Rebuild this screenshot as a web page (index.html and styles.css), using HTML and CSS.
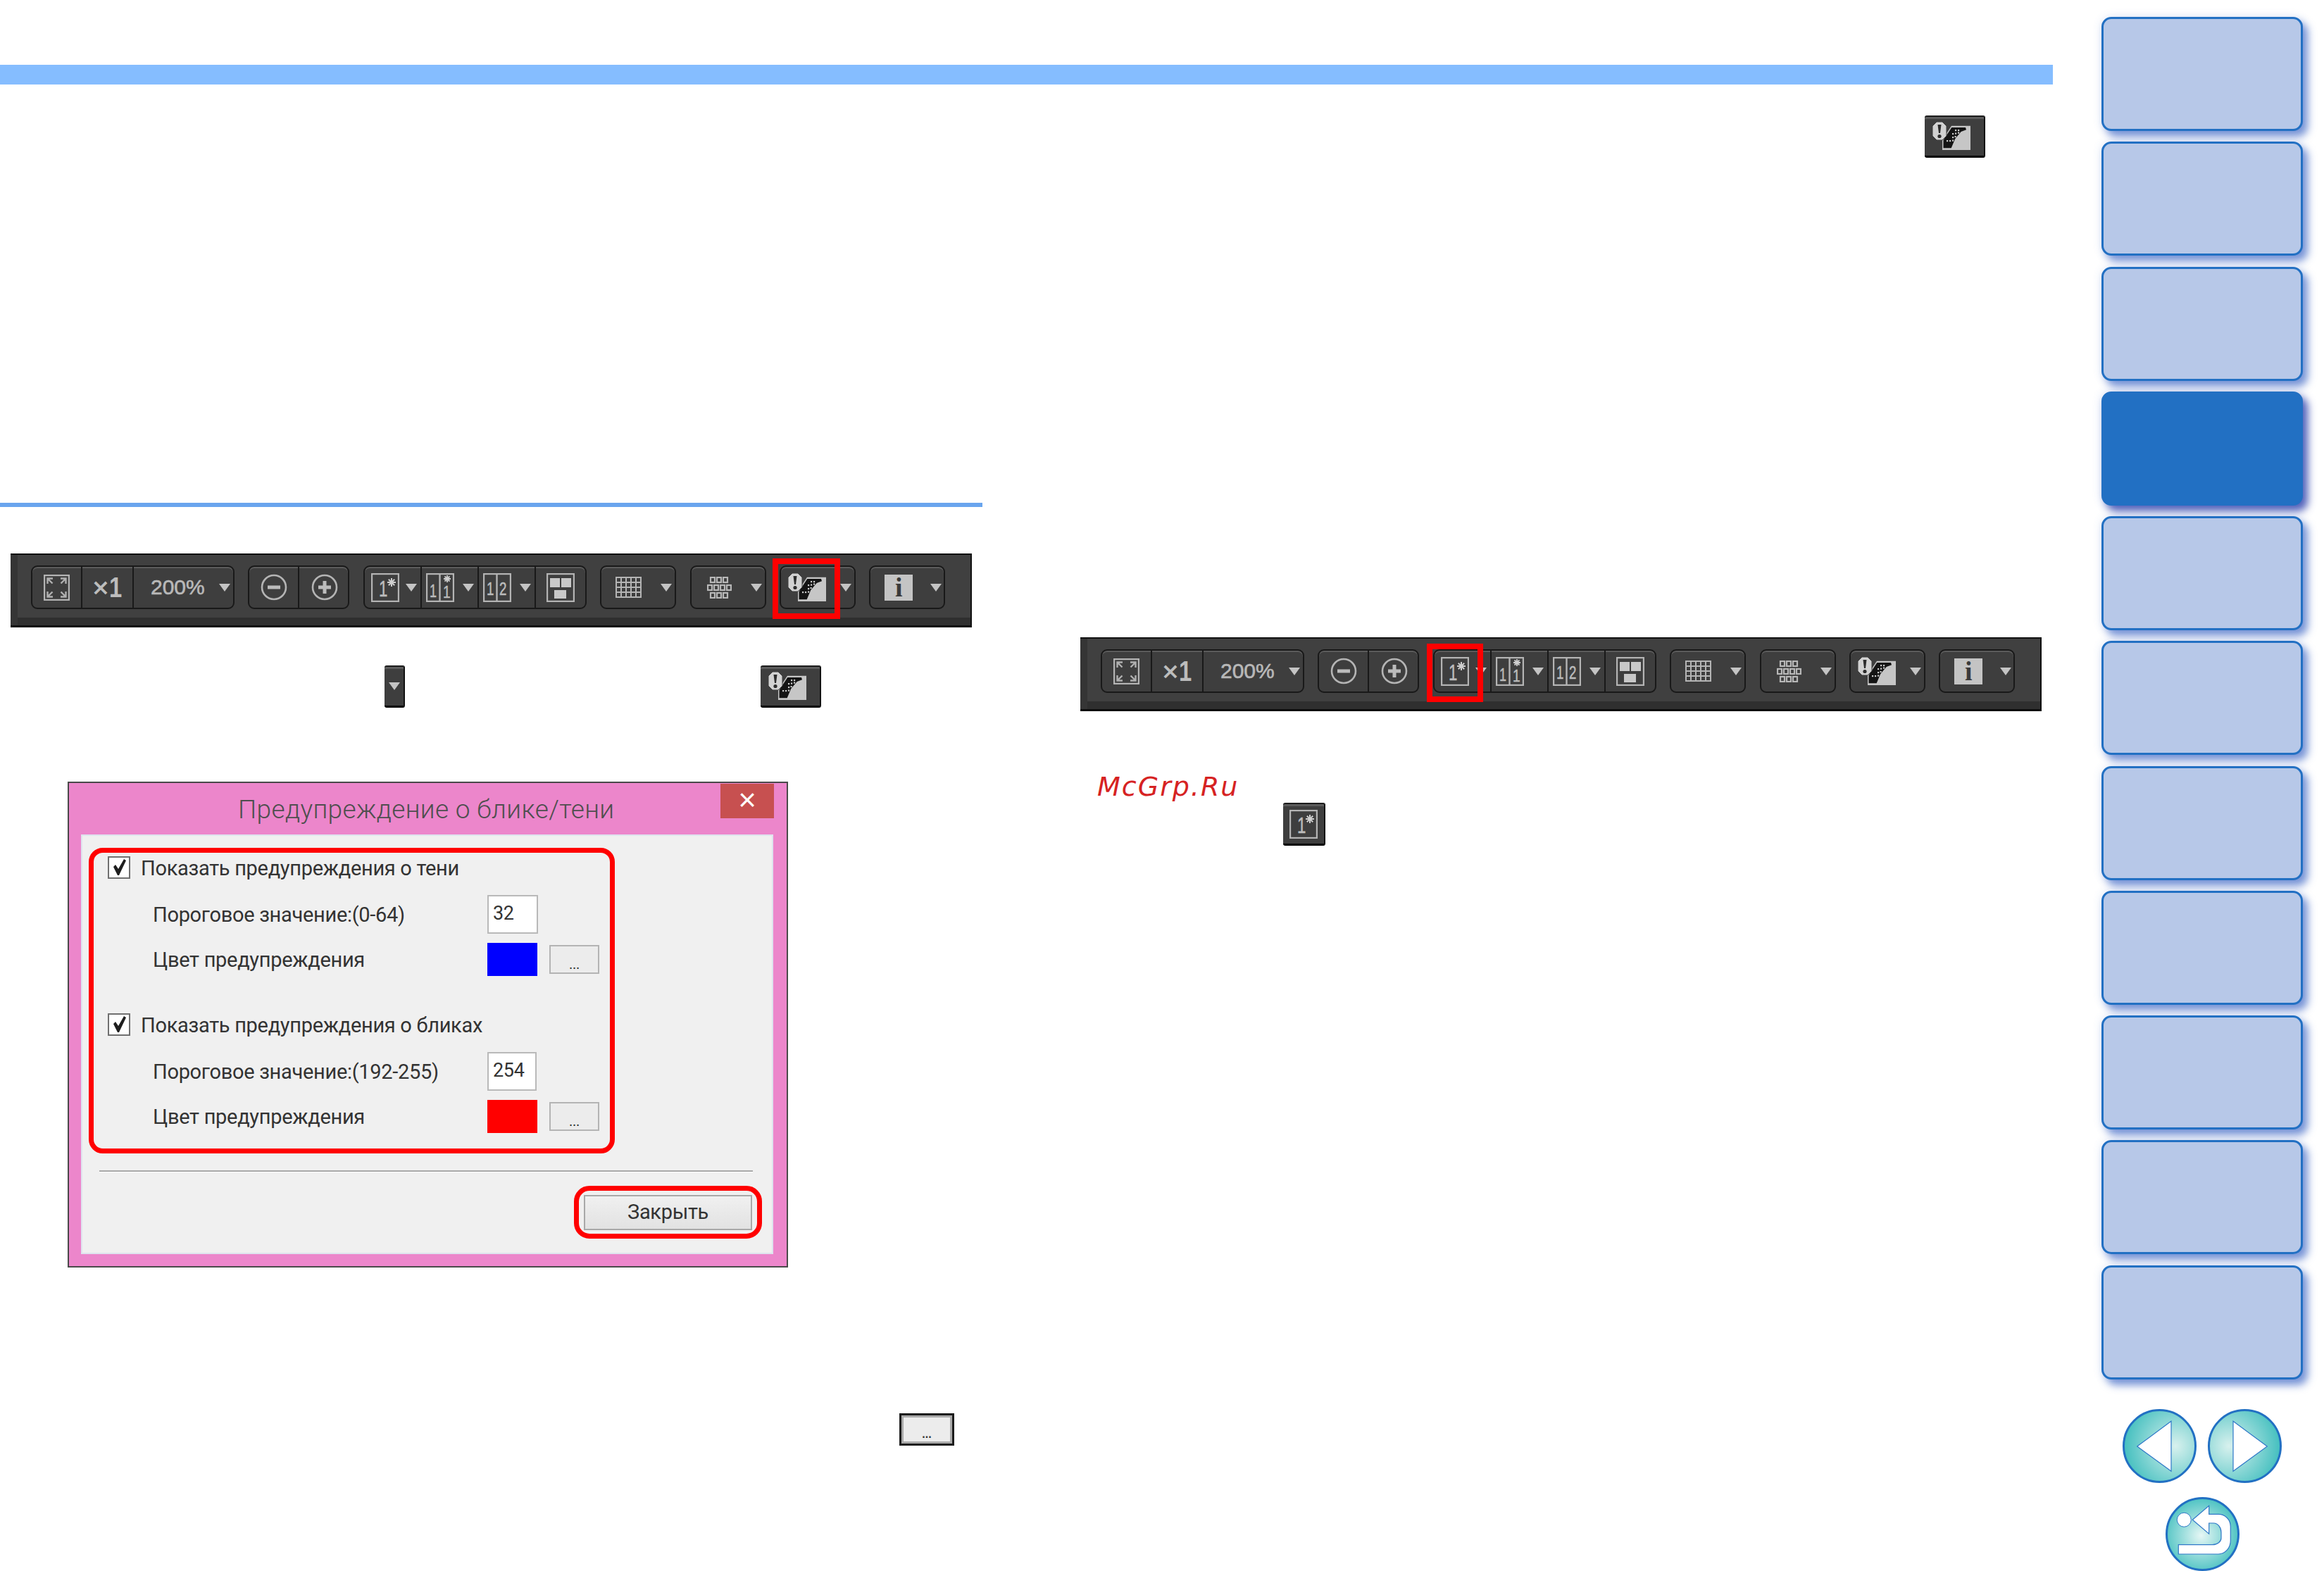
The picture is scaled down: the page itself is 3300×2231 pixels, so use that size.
FILE: index.html
```html
<!DOCTYPE html>
<html lang="ru">
<head>
<meta charset="utf-8">
<title>Предупреждение о блике/тени</title>
<link rel="stylesheet" href="styles.css">
</head>
<body>
<svg class="defs" aria-hidden="true">
  <symbol id="i-fit" viewBox="0 0 37 37">
    <rect x="1" y="1" width="35" height="35" fill="none" stroke="#b4b4b4" stroke-width="2.400"/>
    <path d="M5.500 13V5.500H13M5.500 5.500l7 7M31.500 13V5.500H24M31.500 5.500l-7 7M5.500 24v7.500H13M5.500 31.500l7-7M31.500 24v7.500H24M31.500 31.500l-7-7" fill="none" stroke="#b0b0b0" stroke-width="2.400"/>
  </symbol>
  <symbol id="i-minus" viewBox="0 0 38 38">
    <circle cx="19" cy="19" r="17" fill="none" stroke="#b4b4b4" stroke-width="2.600"/>
    <rect x="10" y="16.500" width="18" height="5" fill="#bcbcbc"/>
  </symbol>
  <symbol id="i-plus" viewBox="0 0 38 38">
    <circle cx="19" cy="19" r="17" fill="none" stroke="#b4b4b4" stroke-width="2.600"/>
    <path d="M10 19h18M19 10v18" stroke="#bcbcbc" stroke-width="5"/>
  </symbol>
  <symbol id="i-frame-one" viewBox="0 0 40 41">
    <rect x="1" y="1" width="38" height="39" fill="none" stroke="#b4b4b4" stroke-width="2.400"/>
    <path d="M29 7v12M23 13h12M24.800 8.800l8.400 8.400M33.200 8.800l-8.400 8.400" stroke="#cfcfcf" stroke-width="2"/>
  </symbol>
  <symbol id="i-frame-two-star" viewBox="0 0 40 41">
    <rect x="1" y="1" width="38" height="39" fill="none" stroke="#b4b4b4" stroke-width="2.400"/>
    <path d="M19.500 1v39" stroke="#b4b4b4" stroke-width="2.400"/>
    <path d="M30 3v10M25 8h10M26.500 4.500l7 7M33.500 4.500l-7 7" stroke="#cfcfcf" stroke-width="1.800"/>
  </symbol>
  <symbol id="i-frame-two" viewBox="0 0 40 41">
    <rect x="1" y="1" width="38" height="39" fill="none" stroke="#b4b4b4" stroke-width="2.400"/>
    <path d="M19.500 1v39" stroke="#b4b4b4" stroke-width="2.400"/>
  </symbol>
  <symbol id="i-layout" viewBox="0 0 40 41">
    <rect x="1" y="1" width="38" height="39" fill="none" stroke="#b4b4b4" stroke-width="2.400"/>
    <path d="M5 7h14v13H5zM21 7h14v13H21zM11 24h17v12H11z" fill="#c8c8c8"/>
  </symbol>
  <symbol id="i-grid" viewBox="0 0 37 30">
    <rect width="37" height="30" fill="#b4b4b4"/>
    <path d="M2 2h5v5H2zM9 2h5v5H9zM16 2h5v5h-5zM23 2h5v5h-5zM30 2h5v5h-5zM2 9h5v5H2zM9 9h5v5H9zM16 9h5v5h-5zM23 9h5v5h-5zM30 9h5v5h-5zM2 16h5v5H2zM9 16h5v5H9zM16 16h5v5h-5zM23 16h5v5h-5zM30 16h5v5h-5zM2 23h5v5H2zM9 23h5v5H9zM16 23h5v5h-5zM23 23h5v5h-5zM30 23h5v5h-5z" fill="#3e3e3e"/>
  </symbol>
  <symbol id="i-dots" viewBox="0 0 35 31">
    <g fill="none" stroke="#b8b8b8" stroke-width="2.200">
      <rect x="5" y="1" width="6" height="7"/><rect x="14" y="1" width="6" height="7"/><rect x="23" y="1" width="6" height="7"/>
      <rect x="1" y="12" width="6" height="7"/><rect x="10" y="12" width="6" height="7"/><rect x="19" y="12" width="6" height="7"/><rect x="28" y="12" width="6" height="7"/>
      <rect x="5" y="23" width="6" height="7"/><rect x="14" y="23" width="6" height="7"/><rect x="23" y="23" width="6" height="7"/>
    </g>
  </symbol>
  <symbol id="i-warn" viewBox="0 0 55 41">
    <path d="M27 5.700h27V40H14V25.500z" fill="#c6c6c6"/>
    <path d="M27.300 8H47l1 3.300L40.700 14l-8.400 10-5.600 13.300H15.500V26z" fill="#141414"/>
    <g fill="#cacaca">
      <rect x="32" y="11" width="2.200" height="2.200"/><rect x="36" y="11" width="2.200" height="2.200"/>
      <rect x="28" y="16" width="2.200" height="2.200"/><rect x="32" y="15.500" width="2.200" height="2.200"/><rect x="36" y="14.500" width="2.200" height="2.200"/>
      <rect x="28" y="21" width="2.200" height="2.200"/><rect x="31.500" y="20" width="2.200" height="2.200"/>
      <rect x="20" y="26" width="2.200" height="2.200"/><rect x="24" y="26" width="2.200" height="2.200"/><rect x="28" y="25.500" width="2.200" height="2.200"/>
    </g>
    <path d="M6 0h8l6 6v14l-6 6H6l-6-6V6z" fill="#d2d2d2" stroke="#3e3e3e" stroke-width="1"/>
    <path d="M7.500 4h5L11 16H9z" fill="#2c2c2c"/>
    <circle cx="10" cy="20.500" r="2.600" fill="#2c2c2c"/>
  </symbol>
  <symbol id="i-check" viewBox="0 0 28 28">
    <path d="M6 13l3-3 4 6 8-14 3 2-10 21h-2z" fill="#1e1e1e"/>
  </symbol>
</svg>

<div class="page">
  <main class="doc">
    <div class="band"></div>
    <div class="cols">
      <section class="col-left">
        <div class="rule"></div>
        <div class="toolbar toolbar-a">
          <div class="group g-view">
            <div class="btn b-center b-fit"><svg class="ic-fit"><use href="#i-fit"/></svg></div>
            <div class="btn b-center b-x1"><span class="x-sign">×</span><span class="x-one">1</span></div>
            <div class="btn b-zoom"><span class="zoom-val">200%</span><i class="caret"></i></div>
          </div>
          <div class="group g-plusminus">
            <div class="btn b-center b-fit"><svg class="ic-circ"><use href="#i-minus"/></svg></div>
            <div class="btn b-center b-x1"><svg class="ic-circ"><use href="#i-plus"/></svg></div>
          </div>
          <div class="group g-panes">
            <div class="btn b-pane b-pane-first">
              <svg class="ic-pane" viewBox="0 0 40 41"><use href="#i-frame-one" width="40" height="41"/><text class="ico-num" transform="translate(11 33) scale(.72 1)" font-size="31">1</text></svg><i class="caret"></i>
            </div>
            <div class="btn b-pane">
              <svg class="ic-pane" viewBox="0 0 40 41"><use href="#i-frame-two-star" width="40" height="41"/><text class="ico-num" transform="translate(5 34) scale(.72 1)" font-size="25">1</text><text class="ico-num" transform="translate(24 35) scale(.8 1)" font-size="24">1</text></svg><i class="caret"></i>
            </div>
            <div class="btn b-pane">
              <svg class="ic-pane" viewBox="0 0 40 41"><use href="#i-frame-two" width="40" height="41"/><text class="ico-num" transform="translate(5 31) scale(.72 1)" font-size="26">1</text><text class="ico-num" transform="translate(23 31) scale(.72 1)" font-size="26">2</text></svg><i class="caret"></i>
            </div>
            <div class="btn b-center b-layout"><svg class="ic-pane"><use href="#i-layout"/></svg></div>
          </div>
          <div class="group g-one b-grid"><svg class="ic-grid"><use href="#i-grid"/></svg><i class="caret"></i></div>
          <div class="group g-one b-dots"><svg class="ic-dots"><use href="#i-dots"/></svg><i class="caret"></i></div>
          <div class="group g-one b-warn"><svg class="ic-warn"><use href="#i-warn"/></svg><i class="caret"></i></div>
          <div class="group g-one b-info"><span class="info-glyph">i</span><i class="caret"></i></div>
          <div class="mark mark-warn"></div>
        </div>

        <div class="tiles">
          <div class="tile tile-caret"><i class="caret"></i></div>
          <div class="tile tile-warn"><svg class="ic-warn"><use href="#i-warn"/></svg></div>
        </div>

        <div class="dialog">
          <div class="titlebar">
            <span class="dlg-title">Предупреждение о блике/тени</span>
            <span class="dlg-close">×</span>
          </div>
          <div class="client">
            <div class="red-box">
              <div class="opt-group">
                <div class="check-row"><span class="checkbox"><svg class="ic-check"><use href="#i-check"/></svg></span><span class="check-text">Показать предупреждения о тени</span></div>
                <div class="field-row"><span class="field-label">Пороговое значение:(0-64)</span><span class="input">32</span></div>
                <div class="color-row"><span class="field-label">Цвет предупреждения</span><span class="swatch swatch-blue"></span><span class="dots-btn">...</span></div>
              </div>
              <div class="opt-group">
                <div class="check-row"><span class="checkbox"><svg class="ic-check"><use href="#i-check"/></svg></span><span class="check-text">Показать предупреждения о бликах</span></div>
                <div class="field-row"><span class="field-label">Пороговое значение:(192-255)</span><span class="input input-narrow">254</span></div>
                <div class="color-row"><span class="field-label">Цвет предупреждения</span><span class="swatch swatch-red"></span><span class="dots-btn">...</span></div>
              </div>
            </div>
            <div class="separator"></div>
            <div class="close-frame"><div class="close-btn">Закрыть</div></div>
          </div>
        </div>

        <div class="page-dots"><span>...</span></div>
      </section>

      <section class="col-right">
        <div class="tile tile-warn tile-top"><svg class="ic-warn"><use href="#i-warn"/></svg></div>
        <div class="toolbar toolbar-b">
          <div class="group g-view">
            <div class="btn b-center b-fit"><svg class="ic-fit"><use href="#i-fit"/></svg></div>
            <div class="btn b-center b-x1"><span class="x-sign">×</span><span class="x-one">1</span></div>
            <div class="btn b-zoom"><span class="zoom-val">200%</span><i class="caret"></i></div>
          </div>
          <div class="group g-plusminus">
            <div class="btn b-center b-fit"><svg class="ic-circ"><use href="#i-minus"/></svg></div>
            <div class="btn b-center b-x1"><svg class="ic-circ"><use href="#i-plus"/></svg></div>
          </div>
          <div class="group g-panes">
            <div class="btn b-pane b-pane-first">
              <svg class="ic-pane" viewBox="0 0 40 41"><use href="#i-frame-one" width="40" height="41"/><text class="ico-num" transform="translate(11 33) scale(.72 1)" font-size="31">1</text></svg><i class="caret"></i>
            </div>
            <div class="btn b-pane">
              <svg class="ic-pane" viewBox="0 0 40 41"><use href="#i-frame-two-star" width="40" height="41"/><text class="ico-num" transform="translate(5 34) scale(.72 1)" font-size="25">1</text><text class="ico-num" transform="translate(24 35) scale(.8 1)" font-size="24">1</text></svg><i class="caret"></i>
            </div>
            <div class="btn b-pane">
              <svg class="ic-pane" viewBox="0 0 40 41"><use href="#i-frame-two" width="40" height="41"/><text class="ico-num" transform="translate(5 31) scale(.72 1)" font-size="26">1</text><text class="ico-num" transform="translate(23 31) scale(.72 1)" font-size="26">2</text></svg><i class="caret"></i>
            </div>
            <div class="btn b-center b-layout"><svg class="ic-pane"><use href="#i-layout"/></svg></div>
          </div>
          <div class="group g-one b-grid"><svg class="ic-grid"><use href="#i-grid"/></svg><i class="caret"></i></div>
          <div class="group g-one b-dots"><svg class="ic-dots"><use href="#i-dots"/></svg><i class="caret"></i></div>
          <div class="group g-one b-warn"><svg class="ic-warn"><use href="#i-warn"/></svg><i class="caret"></i></div>
          <div class="group g-one b-info"><span class="info-glyph">i</span><i class="caret"></i></div>
          <div class="mark mark-one"></div>
        </div>
        <div class="watermark">McGrp.Ru</div>
        <div class="tile tile-one">
          <svg class="ic-pane" viewBox="0 0 40 41"><use href="#i-frame-one" width="40" height="41"/><text class="ico-num" transform="translate(11 33) scale(.72 1)" font-size="31">1</text></svg>
        </div>
      </section>
    </div>
  </main>

  <aside class="side">
    <div class="tabs">
      <div class="tab"></div><div class="tab"></div><div class="tab"></div>
      <div class="tab tab-active"></div>
      <div class="tab"></div><div class="tab"></div><div class="tab"></div>
      <div class="tab"></div><div class="tab"></div><div class="tab"></div><div class="tab"></div>
    </div>
    <div class="nav-row">
      <svg class="nav-btn" viewBox="0 0 105 105">
        <defs><radialGradient id="gl" cx=".72" cy=".5" r=".75"><stop offset="0" stop-color="#d8f1ee"/><stop offset="1" stop-color="#3dbdbd"/></radialGradient></defs>
        <circle cx="52.500" cy="52.500" r="51" fill="url(#gl)" stroke="#2270c3" stroke-width="3"/>
        <path d="M20.700 53 69 17.300v71z" fill="#fff" stroke="#2f78c8" stroke-width="1.200"/>
      </svg>
      <svg class="nav-btn" viewBox="0 0 105 105">
        <defs><radialGradient id="gr" cx=".28" cy=".5" r=".75"><stop offset="0" stop-color="#d8f1ee"/><stop offset="1" stop-color="#3dbdbd"/></radialGradient></defs>
        <circle cx="52.500" cy="52.500" r="51" fill="url(#gr)" stroke="#2270c3" stroke-width="3"/>
        <path d="M36 17.300 84.300 53 36 88.300z" fill="#fff" stroke="#2f78c8" stroke-width="1.200"/>
      </svg>
    </div>
    <svg class="nav-btn nav-return" viewBox="0 0 105 105">
      <defs><radialGradient id="gb" cx=".48" cy=".52" r=".58"><stop offset="0" stop-color="#e6f7f5"/><stop offset="1" stop-color="#3dbdbd"/></radialGradient></defs>
      <circle cx="52.500" cy="52.500" r="51" fill="url(#gb)" stroke="#2270c3" stroke-width="3"/>
      <circle cx="26.300" cy="32.300" r="10" fill="#fff" stroke="#2f78c8" stroke-width="1"/>
      <path d="M38.300 32.300 61.700 12.300v12H75c10 0 17.300 8 17.300 17.400v20C92.300 72 85 81 75 81H18.300V67.700h48.400C74 67.700 79 63 79 58.300V50c0-7-5-13-10.700-13h-6.600v15.300z" fill="#fff" stroke="#2f78c8" stroke-width="1.200"/>
    </svg>
  </aside>
</div>
</body>
</html>
```

FILE: styles.css
```css
* { box-sizing: border-box; }
html, body { margin: 0; padding: 0; background: #fff; }
body { width: 3300px; height: 2231px; overflow: hidden; font-family: Roboto, "Liberation Sans", sans-serif; }
.defs { position: absolute; width: 0; height: 0; }
svg { display: block; flex: none; }

.page { display: flex; width: 3300px; height: 2231px; }
.doc { width: 2915px; flex: none; }
.band { height: 28px; margin-top: 92px; background: #85bdff; }
.cols { display: flex; }
.col-left { width: 1534px; flex: none; }
.col-right { width: 1381px; flex: none; padding-top: 44px; }

.rule { width: 1395px; height: 6px; margin-top: 594px; background: #6aa5ee; }

/* toolbar */
.toolbar {
  position: relative;
  display: flex;
  gap: 19.400px;
  width: 1365px;
  height: 105px;
  padding: 15px 0 0 29px;
  background: #404040;
  border-top: 2px solid #111;
  border-right: 2px solid #111;
  border-bottom: 3px solid #0a0a0a;
  box-shadow: inset 10px 0 0 #353535, inset 0 -11px 0 #2f2f2f;
}
.toolbar-a { margin: 66px 0 0 15px; }
.toolbar-b { margin: 681px 0 0 0; }
.group {
  display: flex;
  flex: none;
  height: 62px;
  background: #3e3e3e;
  border: 2px solid #191919;
  border-radius: 9px;
  box-shadow: inset 0 2px 0 #5b5b5b;
  overflow: hidden;
}
.g-view { width: 289px; }
.g-plusminus { width: 144px; }
.g-panes { width: 317px; }
.g-one { width: 108px; align-items: center; }
.btn { display: flex; align-items: center; flex: none; height: 100%; }
.btn + .btn { border-left: 2px solid #191919; }
.b-center { justify-content: center; }
.b-fit { width: 69px; }
.b-x1 { width: 73px; }
.b-zoom { width: 143px; padding-left: 24px; gap: 20px; }
.b-pane { width: 81px; padding-left: 6px; gap: 12px; }
.b-pane-first { width: 79px; padding-left: 9px; gap: 9px; }
.b-layout { width: 72px; }
.b-grid { padding-left: 20px; gap: 27px; }
.b-dots { padding-left: 22px; gap: 27px; }
.b-warn { padding-left: 10px; gap: 19px; }
.b-info { padding-left: 20px; gap: 25px; }

.caret {
  display: block;
  flex: none;
  width: 0;
  height: 0;
  border-left: 8px solid transparent;
  border-right: 8px solid transparent;
  border-top: 11px solid #c4c4c4;
}
.x-sign { font: 700 32px/1 "DejaVu Sans", sans-serif; color: #bcbcbc; margin-right: -3px; }
.x-one { font: 700 40px/1 "Liberation Sans", sans-serif; color: #bcbcbc; transform: scaleX(.82); }
.zoom-val { font: 400 30px/1 "Liberation Sans", sans-serif; color: #b8b8b8; -webkit-text-stroke: .6px #b8b8b8; }
.ico-num { font-family: "Liberation Sans", sans-serif; fill: #bcbcbc; stroke: #bcbcbc; stroke-width: .5px; }
.info-glyph {
  display: block;
  flex: none;
  width: 40px;
  height: 37px;
  background: #c4c4c4;
  color: #3a3a3a;
  font: 700 38px/37px "Liberation Serif", serif;
  text-align: center;
}

.ic-fit { width: 37px; height: 37px; }
.ic-circ { width: 38px; height: 38px; }
.ic-pane { width: 40px; height: 41px; }
.ic-grid { width: 37px; height: 30px; }
.ic-dots { width: 35px; height: 31px; }
.ic-warn { width: 55px; height: 41px; }
.ic-check { width: 28px; height: 28px; }

.mark { position: absolute; border: 8px solid #f00; }
.mark-warn { left: 1082px; top: 5px; width: 96px; height: 86px; }
.mark-one { left: 492px; top: 7px; width: 80px; height: 83px; }

/* small dark tiles */
.tiles { display: flex; margin-top: 54px; padding-left: 546px; }
.tile {
  display: flex;
  align-items: center;
  justify-content: center;
  flex: none;
  height: 60px;
  background: #3e3e3e;
  border-top: 2px solid #1c1c1c;
  border-right: 2px solid #111;
  border-bottom: 3px solid #000;
  border-radius: 3px;
  box-shadow: inset 0 3px 0 #5b5b5b;
}
.tile-caret { width: 29px; }
.tile-warn { width: 86px; padding-right: 7px; margin-left: 505px; }
.tile-top { margin-left: 1199px; }
.tile-one { width: 60px; height: 61px; margin: 1px 0 0 288px; }

/* dialog */
.dialog {
  width: 1023px;
  height: 690px;
  margin: 105px 0 0 96px;
  padding: 0 19px 19px 17px;
  background: #ec86cb;
  border: 2px solid #4a4a4a;
  color: #333;
}
.titlebar { display: flex; align-items: flex-start; height: 73px; }
.dlg-title { margin: 16px 0 0 223px; font-size: 37px; letter-spacing: .35px; line-height: 44px; color: #4f4f4f; font-weight: 300; white-space: nowrap; }
.dlg-close {
  width: 76px;
  height: 49px;
  margin: 1px -1px 0 auto;
  background: #c75050;
  color: #fff;
  font: 400 44px/46px "Liberation Sans", sans-serif;
  text-align: center;
}
.client {
  height: 596px;
  background: #f0f0f0;
  border: 2px solid #dfe3ee;
  padding-top: 17px;
  font-size: 29px;
  letter-spacing: -.3px;
  line-height: 34px;
  color: #333;
}
.red-box {
  width: 747px;
  height: 434px;
  margin-left: 9px;
  padding-top: 5px;
  border: 7px solid #f00;
  border-radius: 20px;
  display: flex;
  flex-direction: column;
  gap: 53px;
}
.check-row { display: flex; align-items: center; gap: 15px; height: 31px; padding-left: 20px; white-space: nowrap; }
.check-text { position: relative; top: 1px; }
.checkbox {
  display: flex;
  align-items: center;
  justify-content: center;
  width: 32px;
  height: 32px;
  flex: none;
  background: #fff;
  border: 2px solid #707070;
}
.field-row, .color-row { display: flex; align-items: center; padding-left: 84px; white-space: nowrap; }
.field-row { height: 55px; margin-top: 24px; }
.color-row { height: 47px; margin-top: 13px; }
.field-label { width: 475px; flex: none; }
.input {
  width: 72px;
  height: 55px;
  padding-left: 6px;
  background: #fff;
  border: 2px solid #b9b9b9;
  line-height: 49px;
  font-size: 27px;
}
.input-narrow { width: 70px; }
.swatch { width: 71px; height: 47px; flex: none; }
.swatch-blue { background: #0000ff; }
.swatch-red { background: #ff0000; }
.dots-btn {
  display: flex;
  align-items: flex-end;
  justify-content: center;
  width: 71px;
  height: 41px;
  margin-left: 17px;
  background: #ececec;
  border: 2px solid #b4b4b4;
  font-size: 20px;
  line-height: 24px;
}
.separator { width: 928px; height: 3px; margin: 24px 0 0 24px; background: #a8a8a8; border-bottom: 1px solid #fff; }
.close-frame {
  width: 267px;
  height: 75px;
  margin: 19px 14px 0 auto;
  padding: 6px 7px;
  border: 7px solid #f00;
  border-radius: 22px;
}
.close-btn {
  height: 50px;
  background: linear-gradient(#f0f0f0, #e2e2e2);
  border: 2px solid #a8a8a8;
  text-align: center;
  line-height: 44px;
  font-size: 29px;
}

.page-dots {
  display: flex;
  align-items: flex-end;
  justify-content: center;
  width: 78px;
  height: 46px;
  margin: 207px 0 0 1277px;
  background: #ececec;
  border: 3px solid #1c1c1c;
  box-shadow: inset 0 0 0 3px #a9a9a9;
  font: 700 16px/26px "Liberation Sans", sans-serif;
  color: #333;
}

/* watermark */
.watermark {
  margin: 85px 0 0 24px;
  font: italic 400 38px/44px "DejaVu Sans", sans-serif;
  letter-spacing: 2px;
  color: #d62222;
}

/* side navigation */
.side { width: 316px; margin-left: 69px; flex: none; padding-top: 24px; }
.tabs { display: flex; flex-direction: column; gap: 15.250px; width: 286px; }
.tab {
  height: 162px;
  background: #b7c8e8;
  border: 3px solid #2270c3;
  border-radius: 14px;
  box-shadow: 7px 8px 12px rgba(40, 85, 190, .62), 0 0 14px rgba(60, 100, 200, .14);
}
.tab-active { background: #2270c3; box-shadow: 7px 8px 12px rgba(40, 60, 170, .8), 0 0 14px rgba(60, 100, 200, .2); }
.nav-row { display: flex; gap: 16px; margin: 42px 0 0 30px; }
.nav-btn { width: 105px; height: 105px; }
.nav-return { margin: 20px 0 0 91px; }
```
